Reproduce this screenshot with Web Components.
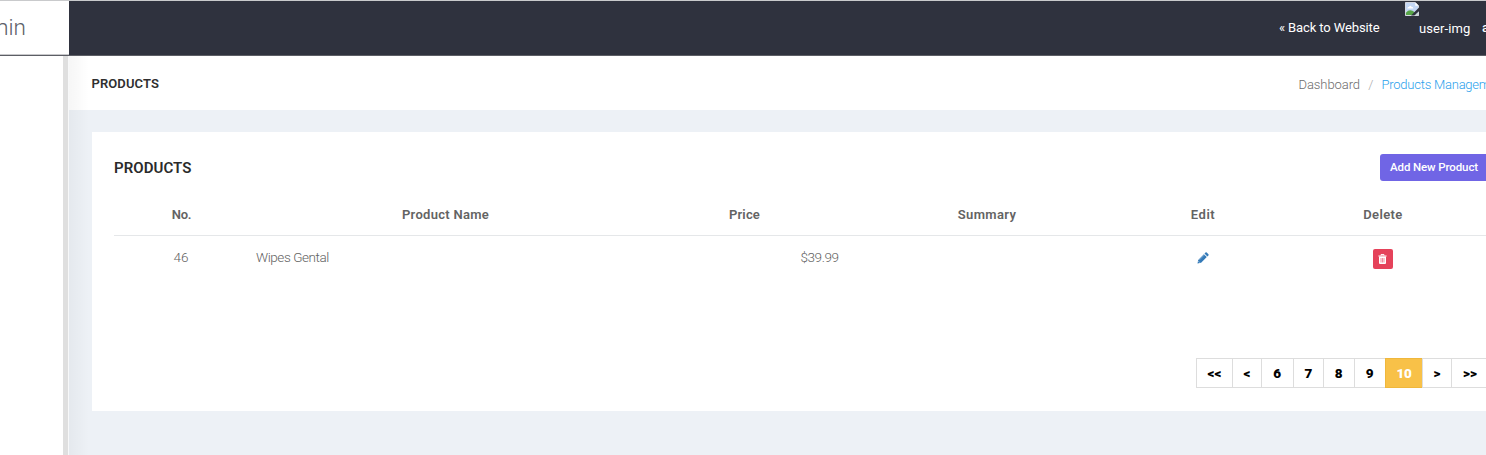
<!DOCTYPE html>
<html lang="en">
<head>
<meta charset="utf-8">
<title>Products</title>
<style>
html,body{margin:0;height:100%;overflow:hidden;background:#fff;font-family:Roboto,"Open Sans",sans-serif}
</style>
</head>
<body>
<admin-page></admin-page>
<script>
// A run of text whose tracking is adjusted to span a given width.
class FitText extends HTMLElement {
  connectedCallback() {
    const root = this.attachShadow({mode: 'open'});
    root.innerHTML = `<style>:host{display:inline-block;white-space:pre;vertical-align:baseline}span{display:inline-block}</style><span><slot></slot></span>`;
    const s = root.querySelector('span');
    const w = parseFloat(this.getAttribute('w'));
    const n = this.textContent.length;
    s.style.letterSpacing = '0px';
    const now = s.getBoundingClientRect().width;
    s.style.letterSpacing = (w - now) / n + 'px';
  }
}

class TopBar extends HTMLElement {
  connectedCallback() {
    this.attachShadow({mode: 'open'}).innerHTML = `<style>
:host{display:flex;height:56px;box-sizing:border-box;border-top:1px solid #c9cacc;border-bottom:1px solid #5c5e65;background:#2f323e;color:#fff;font-size:13px}
.logo{width:69px;flex:none;box-sizing:border-box;background:#fff;color:#5d5f69;border-bottom:1px solid #c8c8cb;display:flex;justify-content:flex-end;padding:13px 43px 0 0;font-size:22.500px;line-height:26px;font-weight:300}
nav{flex:none;width:1417px;display:flex;overflow:hidden;line-height:20px;white-space:nowrap}
.back{margin-left:1210px;padding-top:17px;width:100px;flex:none}
.avatar{margin-left:26px;width:65px;flex:none;display:flex}
.avatar svg{flex:none;width:14px;height:14px;margin-top:1px}
.avatar span{padding-top:18px}
.name{margin-left:12px;padding-top:17px;font-weight:500}
</style>
<div class="logo"><fit-text w="62">admin</fit-text></div>
<nav><span class="back"><fit-text w="100.5">« Back to Website</fit-text></span>
<span class="avatar"><svg viewBox="0 0 15 15"><path d="M.5.5h10.5l3.5 3.5v10.500h-14z" fill="#c4d7f5" stroke="#dfe2e8"/><path d="M11 .5v3.500h3.500z" fill="#fff"/><path d="M2.500 7q0-2 2-2q1-2 2.500 0q2 0 2 2z" fill="#fff"/><path d="M1 14v-2.500Q5 6.500 10.500 11l1 3z" fill="#57a447"/><path d="M15 6L6.500 14.500h3.500L15 10z" fill="#2f323e"/><path d="M10.500 14.500h4V11z" fill="#c9d4d3"/></svg><span><fit-text w="51.5">user-img</fit-text></span></span>
<span class="name">admin</span></nav>`;
  }
}

class PageTitle extends HTMLElement {
  connectedCallback() {
    this.attachShadow({mode: 'open'}).innerHTML = `<style>
:host{display:flex;height:54px;box-sizing:border-box;background:#fff;font-size:13px;line-height:20px;padding:18px 0 0 22.500px}
h4{margin:0;width:1207px;flex:none;font-size:13px;font-weight:600;color:#2f2f2f}
.crumbs{display:flex;white-space:nowrap;color:#6c6c6c;padding-top:1px;font-weight:300}
.sep{width:21.500px;text-align:center;color:#aaa}
.current{color:#2a9fec}
</style>
<h4><fit-text w="67.500">PRODUCTS</fit-text></h4>
<div class="crumbs"><fit-text w="61.500">Dashboard</fit-text><span class="sep">/</span><span class="current"><fit-text w="126">Products Management</fit-text></span></div>`;
  }
}

class ProductTable extends HTMLElement {
  connectedCallback() {
    this.attachShadow({mode: 'open'}).innerHTML = `<style>
:host{display:block;color:#626262;font-size:13.500px;line-height:20px}
.row{display:grid;grid-template-columns:134px 394px 204px 281px 151px 209px;text-align:center}
.head{height:44px;box-sizing:border-box;padding-top:13px;border-bottom:1px solid #e5e7e9;font-size:13px;font-weight:600;color:#636363}
.head span{padding-left:1px}
.body{height:45px;padding-top:11px;font-weight:300}
.name{text-align:left;padding-left:8px}
.price{text-align:right;padding-right:7.500px}
.pencil{width:12px;height:12px;margin:5px auto 0;display:block}
.trash{width:20px;height:20px;margin:2px auto 0;background:#e5425a;border-radius:2px;display:flex;align-items:center;justify-content:center}
.trash svg{width:9px;height:10px;margin-top:-1px}
</style>
<div class="row head"><span><fit-text w="19.500">No.</fit-text></span><span><fit-text w="87">Product Name</fit-text></span><span><fit-text w="31">Price</fit-text></span><span><fit-text w="58.500">Summary</fit-text></span><span><fit-text w="24.500">Edit</fit-text></span><span><fit-text w="39.500">Delete</fit-text></span></div>
<div class="row body"><span><fit-text w="15">46</fit-text></span><span class="name"><fit-text w="73">Wipes Gental</fit-text></span><span class="price"><fit-text w="38">$39.99</fit-text></span><span></span>
<span><svg class="pencil" viewBox="0 0 12 12"><path d="M.5 11.500l.7-3.600L6.900 2.200l2.900 2.900-5.700 5.700zM7.500 1.600L8.500.6q.6-.5 1.200 0l1.700 1.700q.5.6 0 1.200l-1 1z" fill="#347ab8"/><path d="M2.300 8l5-5" stroke="#9fc5e5" stroke-width=".6"/><path d="M1.500 9.300l1.200 1.200" stroke="#fff" stroke-width=".7"/></svg></span>
<span><div class="trash"><svg viewBox="0 0 9 10"><path d="M3 1.500V.6h3v.9M.4 2h8.200" fill="none" stroke="#fff"/><path d="M1 2.500h7V9q0 1-1 1H2Q1 10 1 9z" fill="#fff"/><path d="M3 4v4.500M4.500 4v4.500M6 4v4.500" stroke="#e5425a" stroke-width=".6"/></svg></div></span></div>`;
  }
}

class PageLinks extends HTMLElement {
  connectedCallback() {
    const links = [['&lt;&lt;',36,14],['&lt;',29,7],['6',32,8.500],['7',30,8],['8',31,8.500],['9',31,8.500],['10',37,15],['&gt;',29,7],['&gt;&gt;',37,14]];
    this.attachShadow({mode: 'open'}).innerHTML = `<style>
:host{display:flex;font-size:13.500px;font-weight:900;color:#000}
a{height:30px;box-sizing:border-box;flex:none;border:1px solid #ddd;border-right:0;display:flex;align-items:center;justify-content:center}
a:first-child{border-radius:3px 0 0 3px}
.on{background:#f8c148;border-color:#efb73c;color:#fff}
</style>` + links.map(([t, w, f]) => `<a class="${t === '10' ? 'on' : ''}" style="width:${w}px"><fit-text w="${f}">${t}</fit-text></a>`).join('');
  }
}

class ProductCard extends HTMLElement {
  connectedCallback() {
    this.attachShadow({mode: 'open'}).innerHTML = `<style>
:host{display:block;box-sizing:border-box;height:279px;margin:22px 0 0 23px;padding:22px 0 0 22px;background:#fff}
.top{display:flex;height:38px}
h3{margin:0;padding-top:4px;width:1266px;flex:none;font-size:15px;line-height:20px;font-weight:600;color:#2b2b2b}
.add{height:27px;box-sizing:border-box;flex:none;width:112px;padding-left:10px;background:#7065e5;color:#fff;border-radius:3px;font-size:11.500px;line-height:26px;font-weight:500}
page-links{margin:66px 0 0 1082px}
</style>
<div class="top"><h3><fit-text w="77.500">PRODUCTS</fit-text></h3><div class="add"><fit-text w="88">Add New Product</fit-text></div></div>
<product-table></product-table><page-links></page-links>`;
  }
}

class AdminPage extends HTMLElement {
  connectedCallback() {
    this.attachShadow({mode: 'open'}).innerHTML = `<style>
:host{display:flex;flex-direction:column;width:1486px;height:455px;overflow:hidden}
top-bar{flex:none;width:1486px}
.body{flex:1;display:flex}
aside{width:69px;flex:none;box-sizing:border-box;background:linear-gradient(90deg,#fff 63px,#dfdfdf 63px 68px,#f7f8f9 68px)}
main{width:1417px;flex:none;overflow:hidden;background:#edf1f6;position:relative}
main::before{content:"";position:absolute;left:0;top:0;bottom:0;width:20px;background:linear-gradient(90deg,rgba(0,0,0,.035),transparent);z-index:1}
</style>
<top-bar></top-bar><div class="body"><aside></aside><main><page-title></page-title><product-card></product-card></main></div>`;
  }
}
customElements.define('fit-text', FitText);
customElements.define('page-title', PageTitle);
customElements.define('product-table', ProductTable);
customElements.define('page-links', PageLinks);
customElements.define('product-card', ProductCard);
customElements.define('top-bar', TopBar);
customElements.define('admin-page', AdminPage);
</script>
</body>
</html>
